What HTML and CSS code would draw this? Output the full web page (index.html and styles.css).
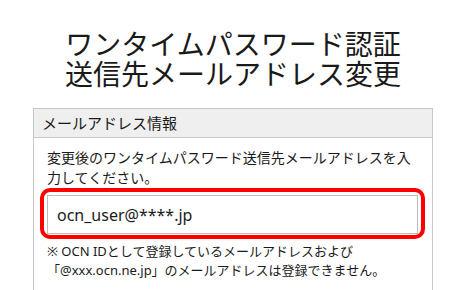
FILE: index.html
```html
<!DOCTYPE html>
<html lang="ja">
<head>
    <meta charset="UTF-8">
    <meta name="viewport" content="width=device-width, initial-scale=1.0">
    <title>ワンタイムパスワード認証 送信先メールアドレス変更</title>
    <link rel="stylesheet" href="styles.css">
</head>
<body>
    <h1 class="page-title">ワンタイムパスワード認証<br>送信先メールアドレス変更</h1>

    <div class="panel">
        <div class="panel-head">メールアドレス情報</div>
        <div class="panel-body">
            <p class="lead">変更後のワンタイムパスワード送信先メールアドレスを入力してください。</p>
            <div class="highlight">
                <input class="mail-input" type="text" value="ocn_user@****.jp">
            </div>
            <p class="note">※ OCN IDとして登録しているメールアドレスおよび<br>「@xxx.ocn.ne.jp」のメールアドレスは登録できません。</p>
        </div>
    </div>
</body>
</html>
```

FILE: styles.css
```css
body {
    margin: 0;
    font-family: "Noto Sans", "Noto Sans CJK JP", sans-serif;
    color: #1a1a1a;
    background: #fff;
}
.page-title {
    margin: 0;
    padding-top: 28px;
    font-size: 28px;
    font-weight: normal;
    line-height: 30px;
    text-align: center;
    font-family: "Noto Sans CJK JP", sans-serif;
}
.panel {
    width: 400px;
    box-sizing: border-box;
    margin: 20px auto 0;
    border: 1px solid #c8c8c8;
}
.panel-head {
    background: #efefef;
    border-bottom: 1px solid #c8c8c8;
    height: 28px;
    line-height: 28px;
    padding-left: 8px;
    font-size: 15px;
    font-family: "Noto Sans CJK JP", sans-serif;
}
.panel-body {
    padding: 10px 13px 20px;
}
.lead {
    margin: 0;
    font-size: 14px;
    line-height: 20px;
}
.highlight {
    margin: 0 -6px 0 -7px;
    border: 4px solid #ff0000;
    border-radius: 10px;
    padding: 3px 3px 1px;
}
.mail-input {
    display: block;
    width: 100%;
    box-sizing: border-box;
    height: 39px;
    border: 1px solid #bdbdbd;
    padding: 0 9px;
    font-family: "Noto Sans", sans-serif;
    font-size: 16px;
    color: #1a1a1a;
    background: #fff;
    outline: none;
}
.note {
    margin: 3px 0 0;
    font-size: 13px;
    line-height: 19px;
}
```
